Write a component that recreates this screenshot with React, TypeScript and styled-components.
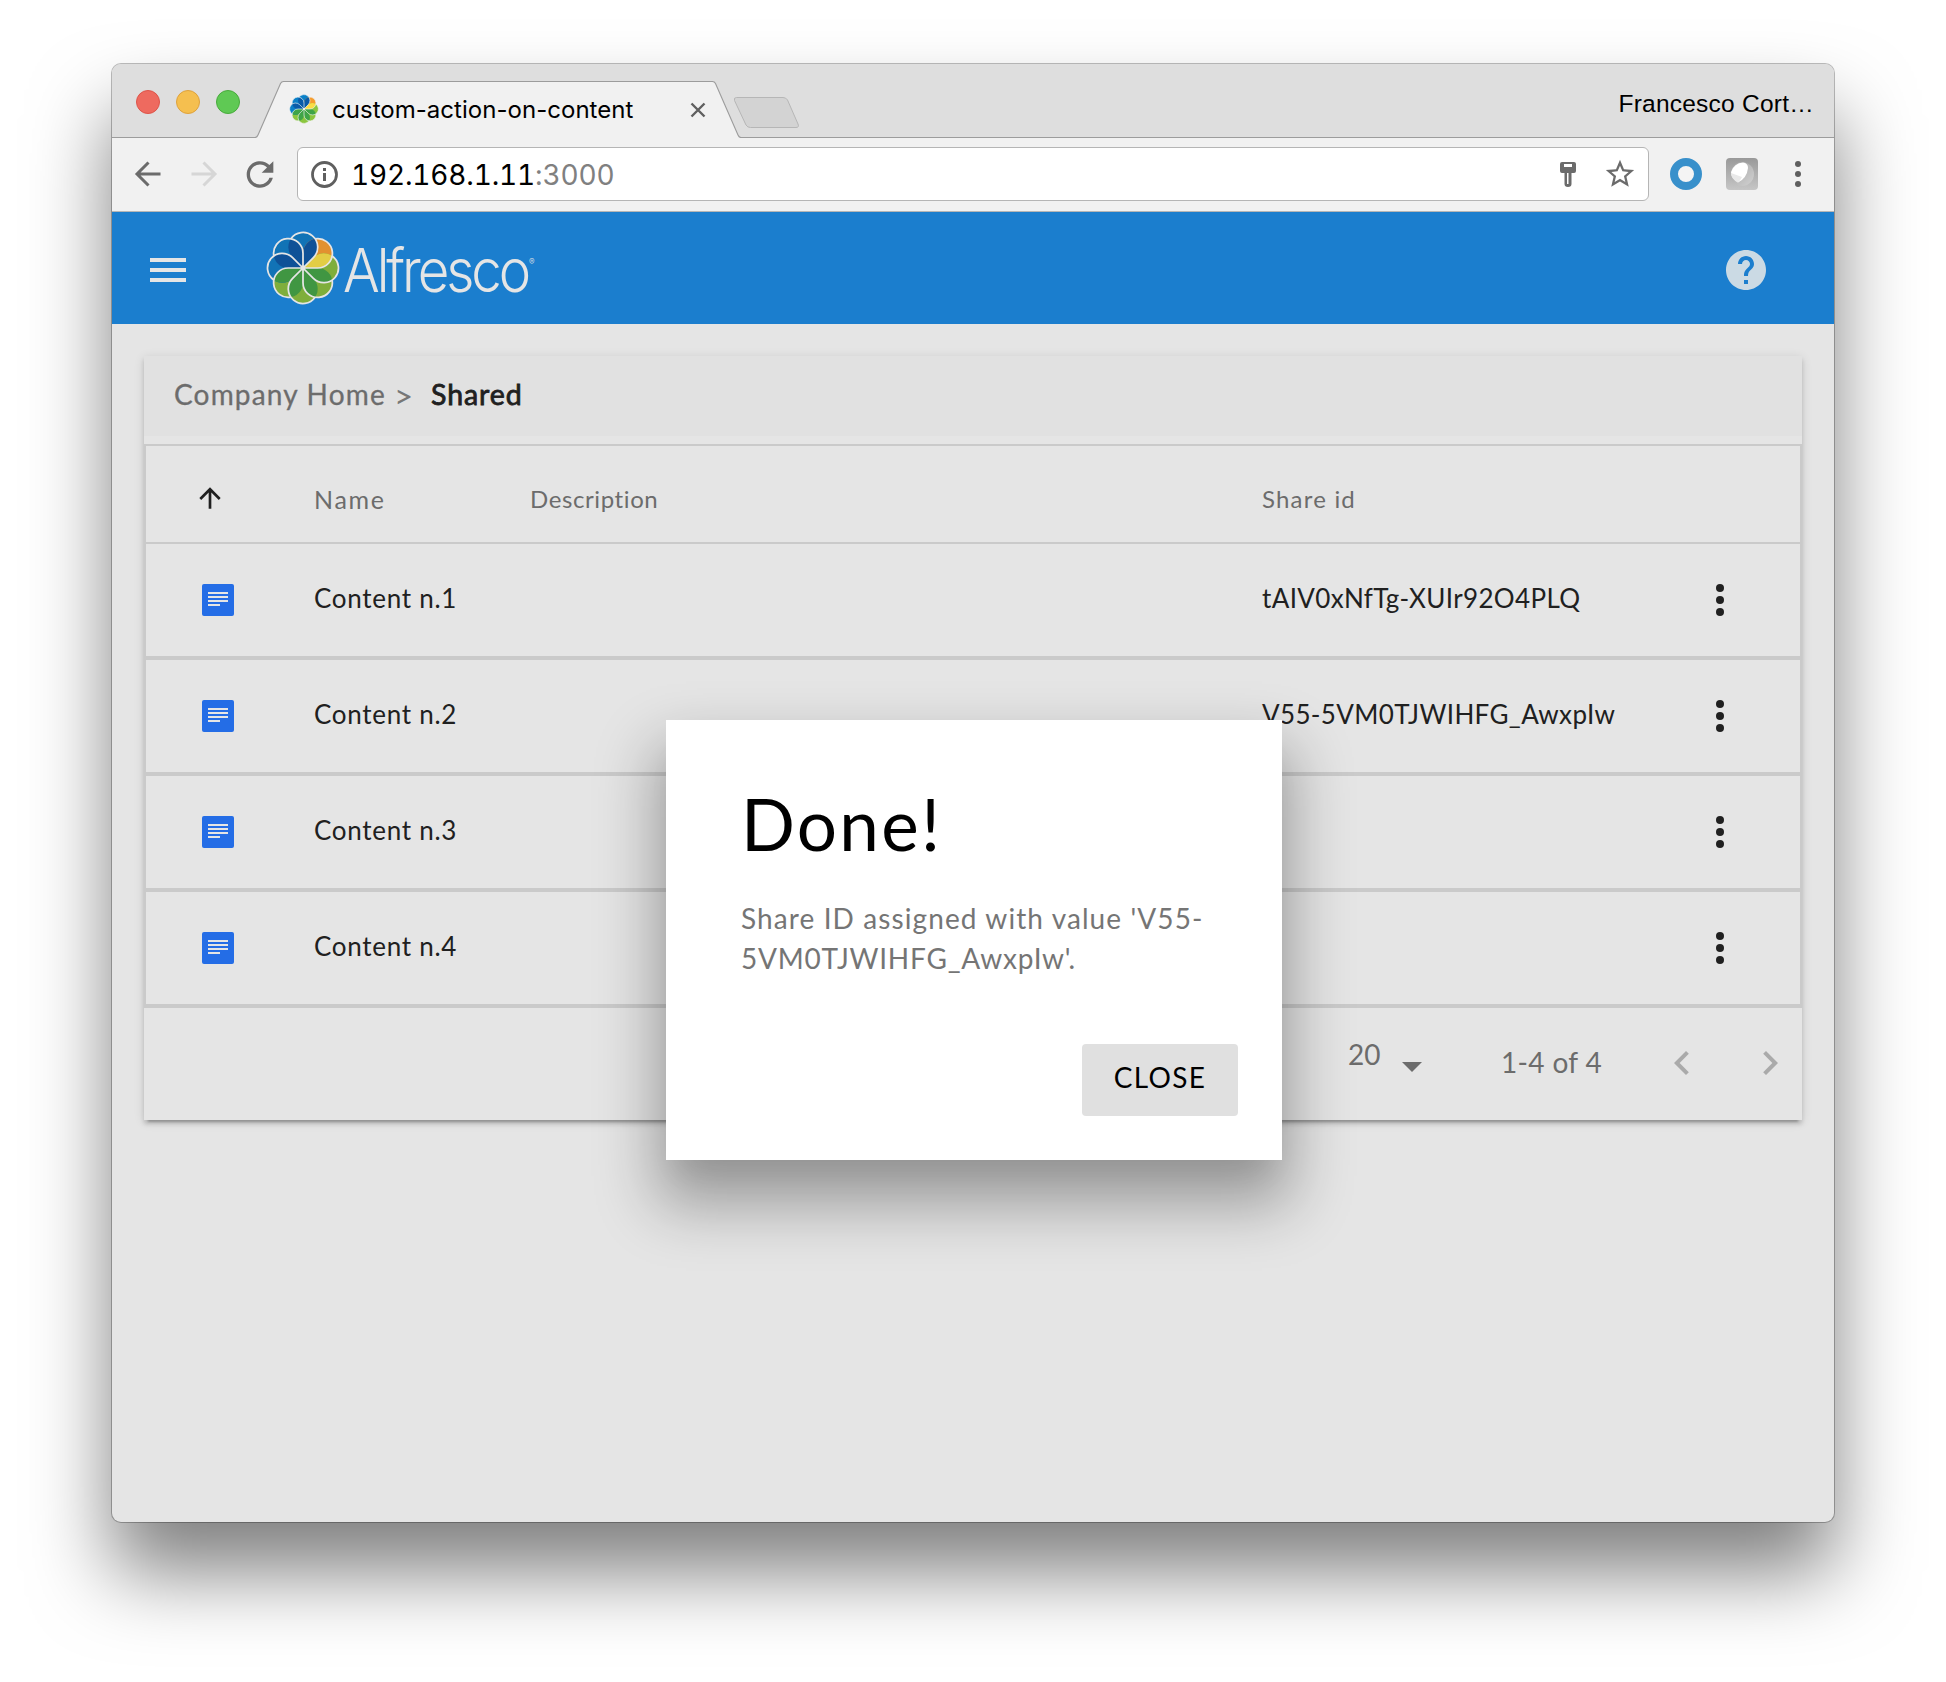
import React from "react";
import styled, { createGlobalStyle } from "styled-components";

const GlobalStyle = createGlobalStyle`
  * { box-sizing: border-box; }
  body { margin: 0; background: #fff; font-family: Lato, "Open Sans", sans-serif; }
  svg { display: block; flex: none; }
`;

const Desktop = styled.div`
  height: 1682px;
  padding: 64px 112px 0;
  overflow: hidden;
`;

const Window = styled.div`
  position: relative;
  display: flex;
  flex-direction: column;
  width: 1722px;
  height: 1458px;
  border-radius: 9px;
  background: #e5e5e5;
  box-shadow: 0 0 0 1px rgba(0, 0, 0, 0.26), 0 50px 80px rgba(0, 0, 0, 0.5);
`;

/* Browser chrome */

const TabStrip = styled.div`
  display: flex;
  flex: none;
  height: 74px;
  padding-left: 24px;
  background: #dedede;
  border-bottom: 1px solid #9c9c9c;
  border-radius: 9px 9px 0 0;
`;

const Lights = styled.div`
  display: flex;
  gap: 16px;
  padding-top: 26px;
  width: 119px;
`;

const Light = styled.span<{ $fill: string; $edge: string }>`
  width: 24px;
  height: 24px;
  border-radius: 50%;
  background: ${(p) => p.$fill};
  border: 1px solid ${(p) => p.$edge};
`;

const Tab = styled.div`
  position: relative;
  display: flex;
  align-items: center;
  width: 486px;
  height: 74px;
  padding: 17px 0 0 34px;
`;

const TabShape = styled.svg`
  position: absolute;
  left: 0;
  top: 0;
`;

const TabIcon = styled.div`
  position: relative;
  margin-top: -1px;
`;

const TabTitle = styled.span`
  position: relative;
  margin: 0 0 0 13px;
  width: 358px;
  font-family: Inter, sans-serif;
  font-size: 24px;
  line-height: 30px;
  letter-spacing: 0.03px;
  color: #000;
`;

const TabClose = styled.svg`
  position: relative;
`;

const NewTab = styled.svg`
  margin: 31px 0 0 -9px;
`;

const Profile = styled.span`
  margin-left: auto;
  padding: 25px 20px 0 0;
  font-family: "Liberation Sans", sans-serif;
  font-size: 24.5px;
  line-height: 30px;
  letter-spacing: 0.24px;
  color: #000;
`;

const Toolbar = styled.div`
  display: flex;
  align-items: center;
  flex: none;
  gap: 16px;
  height: 74px;
  padding-left: 16px;
  background: #f1f1f1;
  border-bottom: 1px solid #b6b6b6;
`;

const Omnibox = styled.div`
  display: flex;
  align-items: center;
  width: 1352px;
  height: 54px;
  margin: -1px 0 0 1px;
  padding: 0 11px 0 10px;
  background: #fff;
  border: 1px solid #b5b5b5;
  border-radius: 6px;
`;

const Url = styled.span`
  flex: 1;
  margin-left: 11px;
  padding-top: 2px;
  font-family: Inter, sans-serif;
  font-variant-numeric: tabular-nums;
  font-size: 28px;
  line-height: 34px;
  letter-spacing: -0.16px;
  color: #000;
`;

const Port = styled.span`
  color: #808080;
`;

const OmniActions = styled.div`
  display: flex;
  align-items: center;
  gap: 23px;
`;

const Extensions = styled.div`
  display: flex;
  align-items: center;
  gap: 24px;
  margin: -1px 0 0 5px;
`;

const MoreSlot = styled.div`
  margin-left: 8px;
`;

/* Application */

const AppBar = styled.header`
  display: flex;
  align-items: center;
  flex: none;
  height: 112px;
  padding: 0 64px 0 38px;
  background: #1b7ece;
`;

const Burger = styled.div`
  display: flex;
  flex-direction: column;
  gap: 6px;
  width: 36px;
  margin: 4px 80px 0 0;
`;

const BurgerLine = styled.span`
  height: 4px;
  background: #e5e5e5;
`;

const Wordmark = styled.div`
  display: flex;
  margin: 3px 0 0 3px;
  font-family: Inter, sans-serif;
  font-weight: 300;
  font-size: 60px;
  line-height: 72px;
  letter-spacing: -3.4px;
  color: #e5e5e5;
  transform: scaleX(0.91);
  transform-origin: left center;
`;

const Registered = styled.sup`
  align-self: flex-start;
  margin: 22px 0 0 1px;
  font-size: 9px;
  line-height: 12px;
  letter-spacing: 0;
`;

const Help = styled.div`
  margin: 4px 0 0 auto;
`;

const Card = styled.main`
  width: 1658px;
  margin: 32px 0 0 32px;
  background: #e5e5e5;
  box-shadow: 0 4px 4px rgba(0, 0, 0, 0.14), 0 6px 2px -4px rgba(0, 0, 0, 0.2),
    0 2px 10px rgba(0, 0, 0, 0.12);
`;

const Breadcrumb = styled.nav`
  display: flex;
  align-items: center;
  height: 80px;
  margin-bottom: 8px;
  padding: 0 30px 5px;
  background: #e1e1e1;
  font-size: 28px;
  line-height: 34px;
`;

const Crumb = styled.span<{ $current?: boolean }>`
  font-size: ${(p) => (p.$current ? 28.5 : 28)}px;
  letter-spacing: ${(p) => (p.$current ? 0.9 : 1.18)}px;
  color: ${(p) => (p.$current ? "#202020" : "#6c6c6c")};
  -webkit-text-stroke: ${(p) => (p.$current ? "0.8px #202020" : "0.3px #6c6c6c")};
`;

const Separator = styled.span`
  margin: 3px 18px 0 8px;
  font-size: 33px;
  color: #777;
`;

const Table = styled.div`
  border: 2px solid #cacaca;
  border-bottom: 0;
`;

const Row = styled.div<{ $head?: boolean }>`
  display: grid;
  grid-template-columns: 168px 216px 732px 1fr 88px;
  align-items: center;
  height: ${(p) => (p.$head ? 98 : 116)}px;
  padding-top: ${(p) => (p.$head ? 9 : 0)}px;
  border-bottom: ${(p) => (p.$head ? 2 : 4)}px solid #cacaca;
`;

const HeadCell = styled.span<{ $spacing: number; $size?: number }>`
  font-size: ${(p) => p.$size ?? 24}px;
  line-height: 30px;
  letter-spacing: ${(p) => p.$spacing}px;
  color: #6c6c6c;
  font-variant-ligatures: none;
`;

const Cell = styled.span<{ $spacing: number }>`
  padding-bottom: 4px;
  font-size: 26px;
  line-height: 32px;
  letter-spacing: ${(p) => p.$spacing}px;
  color: #202020;
`;

const SortSlot = styled.div`
  padding: 0 0 2px 48px;
`;

const IconSlot = styled.div`
  padding-left: 56px;
`;

const Pagination = styled.footer`
  display: flex;
  align-items: center;
  justify-content: flex-end;
  height: 112px;
  padding: 0 8px 0 0;
  font-size: 28px;
  line-height: 34px;
  color: #6c6c6c;
`;

const PageSize = styled.div`
  display: flex;
  align-items: center;
  justify-content: space-between;
  width: 74px;
  margin-right: 79px;
`;

const PageSizeValue = styled.span`
  padding-bottom: 21px;
`;

const Caret = styled.svg`
  margin-top: 5px;
`;

const Range = styled.span`
  width: 104px;
  margin-right: 53px;
  padding-bottom: 5px;
  letter-spacing: 0.35px;
`;

const Pager = styled.div`
  display: flex;
  gap: 40px;
  padding-bottom: 2px;
`;

/* Dialog */

const Overlay = styled.div`
  position: absolute;
  inset: 0;
  display: flex;
  justify-content: center;
  align-items: flex-start;
  padding: 656px 0 0 2px;
`;

const Dialog = styled.section`
  display: flex;
  flex-direction: column;
  width: 616px;
  height: 440px;
  padding: 62px 44px 44px 75px;
  background: #fff;
  box-shadow: 0 36px 58px 9px rgba(0, 0, 0, 0.32),
    0 22px 30px -14px rgba(0, 0, 0, 0.08);
`;

const DialogTitle = styled.h4`
  margin: 0 0 32px;
  font-size: 71px;
  font-weight: 400;
  line-height: 84px;
  letter-spacing: 2.3px;
  color: #000;
`;

const DialogText = styled.p`
  display: flex;
  flex-direction: column;
  margin: 0;
  font-size: 28px;
  line-height: 40px;
  color: #757575;
`;

const DialogLine = styled.span<{ $spacing: number }>`
  letter-spacing: ${(p) => p.$spacing}px;
`;

const DialogButton = styled.button`
  align-self: flex-end;
  width: 156px;
  height: 72px;
  margin-top: auto;
  padding: 0 0 6px;
  border: 0;
  border-radius: 4px;
  background: #e0e0e0;
  font-family: inherit;
  font-size: 28px;
  line-height: 34px;
  letter-spacing: 1.3px;
  color: #000;
`;

const PETALS = [
  { light: "#1173b6", dark: "#0f5197" },
  { light: "#e29130", dark: "#e3cd45" },
  { light: "#7fae3b", dark: "#409642" },
  { light: "#7fae3b", dark: "#409642" },
  { light: "#7fae3b", dark: "#409642" },
  { light: "#7fae3b", dark: "#409642" },
  { light: "#1173b6", dark: "#0f5197" },
  { light: "#1173b6", dark: "#0f5197" },
];
const VIVID = [
  { light: "#0a80c8", dark: "#0a5ba8" },
  { light: "#f59c2d", dark: "#fbdc45" },
  { light: "#8bc63e", dark: "#3fa447" },
  { light: "#8bc63e", dark: "#3fa447" },
  { light: "#8bc63e", dark: "#3fa447" },
  { light: "#8bc63e", dark: "#3fa447" },
  { light: "#0a80c8", dark: "#0a5ba8" },
  { light: "#0a80c8", dark: "#0a5ba8" },
];
const PETAL = "M0 0L10.1 -10.1A14.3 14.3 0 1 0 -10.1 -10.1Z";
const PETAL_EDGE = "M0 0L10.1 -10.1A14.3 14.3 0 1 0 -11.75 -28.37";

function Flower({ id, size, vivid }: { id: string; size: number; vivid?: boolean }) {
  const colors = vivid ? VIVID : PETALS;
  return (
    <svg width={size} height={size} viewBox="-36 -36 72 72">
      <defs>
        <clipPath id={id}>
          <path d={PETAL} transform="rotate(45)" />
        </clipPath>
      </defs>
      {colors.map((c, i) => (
        <path key={i} d={PETAL} fill={c.light} transform={`rotate(${i * 45})`} />
      ))}
      {colors.map((c, i) => (
        <g key={i} transform={`rotate(${i * 45})`}>
          <path d={PETAL} fill={c.dark} clipPath={`url(#${id})`} />
        </g>
      ))}
      {colors.map((_, i) => (
        <path
          key={i}
          d={PETAL_EDGE}
          fill="none"
          stroke={vivid ? "#f1f1f1" : "#e5e5e5"}
          strokeWidth={vivid ? 1.5 : 1.7}
          transform={`rotate(${i * 45})`}
        />
      ))}
      <circle r={2.4} fill={vivid ? "#f1f1f1" : "#e5e5e5"} />
    </svg>
  );
}

function Dots({ radius, step, color }: { radius: number; step: number; color: string }) {
  return (
    <svg width="16" height="40" viewBox="-8 -20 16 40" fill={color}>
      <circle cy={-step} r={radius} />
      <circle r={radius} />
      <circle cy={step} r={radius} />
    </svg>
  );
}

function DocIcon() {
  return (
    <svg width="32" height="32" viewBox="0 0 32 32">
      <rect width="32" height="32" rx="2" fill="#246de6" />
      <path d="M6 8h20v2H6zM6 12h20v2H6zM6 16h20v2H6zM6 20h12v2H6z" fill="#e5e5e5" />
    </svg>
  );
}

const rows = [
  { name: "Content n.1", share: "tAIV0xNfTg-XUIr92O4PLQ" },
  { name: "Content n.2", share: "V55-5VM0TJWIHFG_AwxpIw" },
  { name: "Content n.3", share: "" },
  { name: "Content n.4", share: "" },
];

export default function App() {
  return (
    <Desktop>
      <GlobalStyle />
      <Window>
        <TabStrip>
          <Lights>
            <Light $fill="#ee6a5f" $edge="#de5449" />
            <Light $fill="#f5bf4f" $edge="#dfa23c" />
            <Light $fill="#5fc954" $edge="#48ab3c" />
          </Lights>
          <Tab>
            <TabShape width="486" height="74" viewBox="0 0 486 74">
              <path
                d="M0 74L1 73.5Q2 73 3 71L25.500 19.500Q26.500 17.500 28.500 17.500H457.500Q459.500 17.500 460.500 19.500L483 71Q484 73.500 486 74Z"
                fill="#f1f1f1"
              />
              <path
                d="M0 73.500Q2 73.500 3 71L25.500 19.500Q26.500 17.500 28.500 17.500H457.500Q459.500 17.500 460.500 19.500L483 71Q484 73.500 486 73.500"
                fill="none"
                stroke="#9c9c9c"
                strokeWidth="1.1"
              />
            </TabShape>
            <TabIcon>
              <Flower id="petal-tab" size={30} vivid />
            </TabIcon>
            <TabTitle>custom-action-on-content</TabTitle>
            <TabClose width="16" height="16" viewBox="0 0 16 16">
              <path d="M1.500 1.500L14.500 14.500M14.500 1.500L1.500 14.500" stroke="#606060" strokeWidth="2.400" />
            </TabClose>
          </Tab>
          <NewTab width="70" height="36" viewBox="0 0 70 36">
            <path
              d="M4.500 2.500H51Q54 2.500 55.500 5L66 29Q67.500 32.500 64 32.500H18.500Q15.500 32.500 14 30L2.500 5.500Q1.500 2.500 4.500 2.500Z"
              fill="#d3d3d3"
              stroke="#b6b6b6"
            />
          </NewTab>
          <Profile>Francesco Cort…</Profile>
        </TabStrip>

        <Toolbar>
          <svg width="40" height="40" viewBox="-20 -20 40 40" fill="none" stroke="#6b6b6b" strokeWidth="3">
            <path d="M0.500 -12.500L-11 -1L0.500 10.500M-11 -1H12.500" />
          </svg>
          <svg width="40" height="40" viewBox="-20 -20 40 40" fill="none" stroke="#d6d6d6" strokeWidth="3">
            <path d="M-0.500 -12.500L11 -1L-0.500 10.500M11 -1H-12.500" />
          </svg>
          <svg width="40" height="40" viewBox="0 0.300 24 24" fill="#6b6b6b">
            <path d="M17.650 6.350C16.200 4.900 14.210 4 12 4c-4.420 0-7.990 3.580-7.990 8s3.570 8 7.990 8c3.730 0 6.840-2.550 7.730-6h-2.080c-.82 2.330-3.040 4-5.650 4-3.310 0-6-2.690-6-6s2.690-6 6-6c1.660 0 3.140.69 4.220 1.780L13 11h7V4l-2.350 2.350z" />
          </svg>
          <Omnibox>
            <svg width="32" height="32" viewBox="-16.500 -16.500 32 32">
              <circle r="12" fill="none" stroke="#5f5f5f" strokeWidth="2.800" />
              <path d="M-1.500 -6.500h3v3h-3zM-1.500 -1.500h3v8h-3z" fill="#5f5f5f" />
            </svg>
            <Url>
              192.168.1.11<Port>:3000</Port>
            </Url>
            <OmniActions>
              <svg width="24" height="32" viewBox="0 0 24 32" fillRule="evenodd" fill="#6b6b6b">
                <path d="M6 4h12q2 0 2 2v7q0 2-2 2h-2.500v11q0 3-3.500 3t-3.500-3v-11H6q-2 0-2-2V6q0-2 2-2zM8 6v3h8V6zM11 15v11h1.500v-11z" />
              </svg>
              <svg width="34" height="34" viewBox="0 0 24 24" fill="#6b6b6b">
                <path d="M22 9.240l-7.190-.62L12 2 9.190 8.630 2 9.240l5.460 4.730L5.820 21 12 17.270 18.180 21l-1.630-7.030L22 9.240zM12 15.400l-3.760 2.270 1-4.280-3.320-2.880 4.380-.38L12 6.100l1.710 4.040 4.380.38-3.320 2.880 1 4.280L12 15.400z" />
              </svg>
            </OmniActions>
          </Omnibox>
          <Extensions>
            <svg width="32" height="32" viewBox="0 0 32 32">
              <circle cx="16" cy="16" r="12" fill="#f4f4f4" stroke="#3890cb" strokeWidth="8" />
            </svg>
            <svg width="32" height="32" viewBox="0 0 32 32">
              <defs>
                <linearGradient id="tile" x1="0" y1="0" x2="0" y2="1">
                  <stop offset="0" stopColor="#999" />
                  <stop offset="1" stopColor="#c6c6c6" />
                </linearGradient>
                <linearGradient id="disc" x1="0" y1="0" x2="1" y2="1">
                  <stop offset="0" stopColor="#a2a2a2" />
                  <stop offset="1" stopColor="#d2d2d2" />
                </linearGradient>
              </defs>
              <rect width="32" height="32" rx="4" fill="url(#tile)" />
              <circle cx="16" cy="16" r="12" fill="url(#disc)" />
              <path d="M12 24.500Q5 20 5 14Q8 5 17 4.500Q22 5 22 10Q21 20 12 24.500Z" fill="#fff" />
              <path d="M5 15L16 19Q14 23 12 24.500Q5 21 5 15Z" fill="#e9e9e9" />
            </svg>
            <MoreSlot>
              <Dots radius={3} step={10} color="#5f5f5f" />
            </MoreSlot>
          </Extensions>
        </Toolbar>

        <AppBar>
          <Burger>
            <BurgerLine />
            <BurgerLine />
            <BurgerLine />
          </Burger>
          <Flower id="petal-logo" size={74} />
          <Wordmark>
            Alfresco<Registered>®</Registered>
          </Wordmark>
          <Help>
            <svg width="48" height="48" viewBox="0 0 24 24" fill="#cbdae4">
              <path d="M12 2C6.480 2 2 6.480 2 12s4.480 10 10 10 10-4.480 10-10S17.520 2 12 2zm1 17h-2v-2h2v2zm2.070-7.750l-.9.920C13.450 12.900 13 13.500 13 15h-2v-.5c0-1.100.45-2.100 1.170-2.830l1.240-1.260c.37-.36.59-.86.59-1.410 0-1.100-.9-2-2-2s-2 .9-2 2H8c0-2.210 1.790-4 4-4s4 1.790 4 4c0 .88-.36 1.680-.93 2.250z" />
            </svg>
          </Help>
        </AppBar>

        <Card>
          <Breadcrumb>
            <Crumb>Company Home</Crumb>
            <Separator>&gt;</Separator>
            <Crumb $current>Shared</Crumb>
          </Breadcrumb>
          <Table>
            <Row $head>
              <SortSlot>
                <svg width="32" height="32" viewBox="0 0 24 24" fill="#202020">
                  <path d="M4 12l1.410 1.410L11 7.830V20h2V7.830l5.580 5.590L20 12l-8-8-8 8z" />
                </svg>
              </SortSlot>
              <HeadCell $size={25} $spacing={1.7}>Name</HeadCell>
              <HeadCell $spacing={0.6}>Description</HeadCell>
              <HeadCell $spacing={1.2}>Share id</HeadCell>
            </Row>
            {rows.map((row) => (
              <Row key={row.name}>
                <IconSlot>
                  <DocIcon />
                </IconSlot>
                <Cell $spacing={0.72}>{row.name}</Cell>
                <span />
                <Cell $spacing={0.36}>{row.share}</Cell>
                <Dots radius={4} step={12} color="#202020" />
              </Row>
            ))}
          </Table>
          <Pagination>
            <PageSize>
              <PageSizeValue>20</PageSizeValue>
              <Caret width="20" height="10" viewBox="0 0 20 10">
                <path d="M0 0H20L10 10Z" fill="#6c6c6c" />
              </Caret>
            </PageSize>
            <Range>1-4 of 4</Range>
            <Pager>
              <svg width="48" height="48" viewBox="0 0 24 24" fill="#aaa">
                <path d="M15.410 7.410L14 6l-6 6 6 6 1.410-1.410L10.830 12z" />
              </svg>
              <svg width="48" height="48" viewBox="0 0 24 24" fill="#aaa">
                <path d="M10 6L8.590 7.410 13.170 12l-4.580 4.590L10 18l6-6z" />
              </svg>
            </Pager>
          </Pagination>
        </Card>

        <Overlay>
          <Dialog>
            <DialogTitle>Done!</DialogTitle>
            <DialogText>
              <DialogLine $spacing={1.1}>Share ID assigned with value 'V55-</DialogLine>
              <DialogLine $spacing={0.77}>5VM0TJWIHFG_AwxpIw'.</DialogLine>
            </DialogText>
            <DialogButton>CLOSE</DialogButton>
          </Dialog>
        </Overlay>
      </Window>
    </Desktop>
  );
}
